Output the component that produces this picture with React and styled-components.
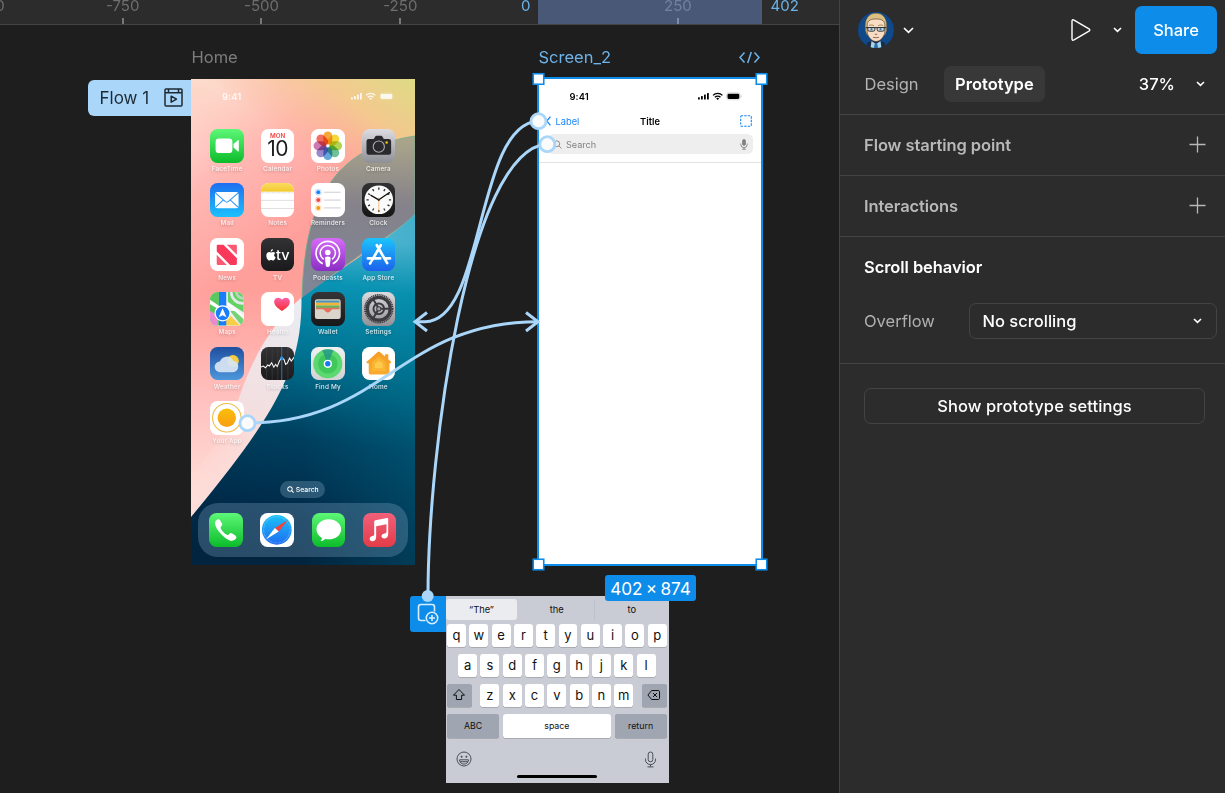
import React from 'react';
import styled, { createGlobalStyle } from 'styled-components';

const Global = createGlobalStyle`
  * { box-sizing: border-box; }
  html, body { margin: 0; background: #1e1e1e; overflow: hidden; }
  body { font-family: Inter, "Liberation Sans", sans-serif; font-size: 16.5px; color: #fff; }
  svg { display: block; flex: none; }
`;

const Shell = styled.div`
  display: flex;
  width: 1225px;
  height: 793px;
`;

/* ---------- canvas ---------- */
const Canvas = styled.main`
  display: flex;
  flex-direction: column;
  width: 839px;
  background: #1e1e1e;
  overflow: hidden;
`;

const Ruler = styled.div`
  position: relative;
  display: flex;
  height: 25px;
  background: #2c2c2c;
  border-bottom: 1px solid #444;
  overflow: hidden;
  font-size: 15px;
  color: #6e6e6e;
`;

const MarkRow = styled.div`
  position: relative;
  display: flex;
  height: 24px;
  flex: none;
`;

const Mark = styled.div`
  flex: none;
  display: flex;
  flex-direction: column;
  align-items: center;
  justify-content: space-between;
  width: 138.8px;
  line-height: 11px;
  color: ${(p) => (p.$dim ? '#7381a0' : '#6e6e6e')};
  &:first-child { margin-left: -85.5px; }
  &::after {
    content: '';
    width: 2px;
    height: 6px;
    background: ${(p) => (p.$dim ? '#7f8ba6' : '#777')};
    visibility: ${(p) => (p.$blank ? 'hidden' : 'visible')};
  }
`;

const Band = styled.div`
  position: absolute;
  left: 538px;
  top: 0;
  width: 224px;
  height: 24px;
  background: #4a5878;
`;

const BandEnd = styled.span`
  position: absolute;
  top: 0;
  line-height: 11px;
  color: #6cb4ea;
  ${(p) => (p.$side === 'start' ? 'right: 308.5px;' : 'left: 770.5px;')}
`;

const Surface = styled.div`
  position: relative;
  flex: 1;
`;

const Placed = styled.div`
  position: absolute;
  left: ${(p) => p.$x}px;
  top: ${(p) => p.$y}px;
`;

const FrameName = styled(Placed)`
  line-height: 20px;
  color: ${(p) => (p.$active ? '#6cb4ea' : '#7d7d7d')};
`;

const FlowTag = styled(Placed)`
  display: flex;
  align-items: center;
  justify-content: space-between;
  width: 103px;
  height: 36px;
  padding: 0 8px 0 11.5px;
  border-radius: 6px 0 0 6px;
  background: #a9d6f9;
  color: #1e2a33;
  font-size: 17px;
`;

const SizeTag = styled(Placed)`
  display: flex;
  align-items: center;
  justify-content: center;
  width: 91px;
  height: 26px;
  border-radius: 3px;
  background: #0d8ce9;
  font-size: 17.2px;
  word-spacing: -1.6px;
  white-space: nowrap;
`;

const OverlayBadge = styled(Placed)`
  display: flex;
  align-items: center;
  justify-content: center;
  width: 36.5px;
  height: 36px;
  border-radius: 3px 0 0 3px;
  background: #0d8ce9;
`;

const Links = styled.svg`
  position: absolute;
  inset: 0;
`;

/* ---------- phone screens ---------- */
const Phone = styled(Placed)`
  width: 223.5px;
  height: 486px;
  overflow: hidden;
  background: ${(p) => p.$bg || '#fff'};
  color: ${(p) => p.$ink};
`;

const Wallpaper = styled.svg`
  position: absolute;
  inset: 0;
`;

const PhoneBody = styled.div`
  position: relative;
  display: flex;
  flex-direction: column;
  height: 100%;
`;

const StatusRow = styled.div`
  display: flex;
  align-items: center;
  justify-content: space-between;
  height: 33px;
  padding: 2.5px 20px 0 31px;
  font-size: 9.4px;
  font-weight: 600;
  letter-spacing: 0.1px;
  opacity: ${(p) => (p.$soft ? 0.85 : 1)};
`;

const AppGrid = styled.div`
  display: grid;
  grid-template-columns: repeat(4, 33.6px);
  grid-auto-rows: 54.4px;
  column-gap: 16.8px;
  padding: 17px 0 0 19.4px;
`;

const AppCell = styled.div`
  display: flex;
  flex-direction: column;
  align-items: center;
  gap: 2.4px;
`;

const AppLabel = styled.span`
  font-size: 6.4px;
  font-weight: 500;
  line-height: 8px;
  letter-spacing: 0.18px;
  white-space: nowrap;
  color: rgba(255, 255, 255, 0.85);
  text-shadow: 0 1px 3px rgba(0, 0, 0, 0.25);
`;

const Tile = styled.div`
  width: 33.6px;
  height: 33.6px;
  border-radius: 7.6px;
  overflow: hidden;
  background: ${(p) => p.$bg};
`;

const CalendarFace = styled.div`
  display: flex;
  flex-direction: column;
  align-items: center;
  padding-top: 3px;
  color: #1c1c1e;
  font-size: 21px;
  line-height: 20px;
  letter-spacing: -0.6px;
`;

const Weekday = styled.span`
  font-size: 6.2px;
  font-weight: 600;
  line-height: 7px;
  letter-spacing: 0;
  color: #f0403c;
`;

const TvFace = styled.div`
  display: flex;
  align-items: center;
  justify-content: center;
  gap: 0.5px;
  height: 100%;
  color: #fff;
  font-size: 14.5px;
  font-weight: 500;
`;

const SearchPill = styled.div`
  display: flex;
  align-items: center;
  justify-content: center;
  gap: 2px;
  align-self: center;
  width: 45px;
  height: 17px;
  margin-top: 25.5px;
  border-radius: 9px;
  background: rgba(120, 160, 185, 0.35);
  font-size: 6.8px;
  font-weight: 500;
`;

const Dock = styled.div`
  display: flex;
  align-items: center;
  justify-content: space-between;
  margin: 5px 6.5px 0 6.5px;
  height: 54.5px;
  padding: 0 11.5px;
  border-radius: 20px;
  background: rgba(120, 160, 190, 0.33);
`;

const NavRow = styled.div`
  display: grid;
  grid-template-columns: 1fr auto 1fr;
  align-items: center;
  height: 18px;
  padding: 0 10px 0 7px;
  font-size: 9.3px;
`;

const NavBack = styled.span`
  display: flex;
  align-items: center;
  gap: 5px;
  color: #1684fb;
`;

const NavTitle = styled.strong`
  padding-left: 2.5px;
  font-weight: 600;
`;

const NavAction = styled.span`
  justify-self: end;
`;

const SearchField = styled.div`
  display: flex;
  align-items: center;
  gap: 4px;
  height: 20px;
  margin: 4px 9px 8px;
  padding: 0 5.5px 0 5.5px;
  border-radius: 5.5px;
  background: #eee;
  color: #828286;
  font-size: 9.1px;
`;

const SearchHint = styled.span`
  flex: 1;
`;

const Rule = styled.div`
  height: 1px;
  background: #e3e3e3;
`;

/* ---------- keyboard ---------- */
const Keyboard = styled(Placed)`
  display: flex;
  flex-direction: column;
  width: 223.5px;
  height: 186.5px;
  background: #c9ccd4;
  color: #111;
`;

const Suggestions = styled.div`
  display: grid;
  grid-template-columns: 71px 77.5px 1fr;
  height: 28px;
  padding: 3px 0 4px 0.5px;
  font-size: 9.3px;
`;

const Suggestion = styled.span`
  display: flex;
  align-items: center;
  justify-content: center;
  border-radius: ${(p) => (p.$on ? 3 : 0)}px;
  background: ${(p) => (p.$on ? '#ebecf0' : 'transparent')};
  border-right: ${(p) => (p.$split ? '1px solid #bec1c9' : '0')};
  padding-left: ${(p) => (p.$split ? 3 : 0)}px;
`;

const KeyRow = styled.div`
  display: flex;
  justify-content: ${(p) => (p.$spread ? 'space-between' : 'center')};
  gap: 3.3px;
  height: 23.3px;
  margin-bottom: 6.8px;
  padding: 0 2.4px 0 1.6px;
`;

const KeyGroup = styled.div`
  display: flex;
  gap: 3.3px;
`;

const Key = styled.span`
  display: flex;
  align-items: center;
  justify-content: center;
  width: ${(p) => p.$w || 19}px;
  height: 23.3px;
  padding-bottom: ${(p) => (p.$small ? 0 : 1.8)}px;
  border-radius: 2.8px;
  background: ${(p) => (p.$dark ? '#a0a5b2' : '#fff')};
  box-shadow: 0 0.6px 0 #898a8d;
  font-size: ${(p) => (p.$small ? 8.8 : 13)}px;
`;

const KeyboardFoot = styled.div`
  display: flex;
  justify-content: space-between;
  padding: 7px 12.5px 0 10.5px;
`;

const HomeBar = styled.div`
  align-self: center;
  width: 80px;
  height: 2.8px;
  margin-top: 6.5px;
  border-radius: 2px;
  background: #000;
`;

/* ---------- side panel ---------- */
const Panel = styled.aside`
  display: flex;
  flex-direction: column;
  width: 386px;
  background: #2c2c2c;
  border-left: 1px solid #444;
`;

const TopBar = styled.div`
  display: flex;
  align-items: center;
  height: 60px;
  padding: 0 8px 0 18px;
`;

const AccountMenu = styled.div`
  display: flex;
  align-items: center;
  gap: 8.5px;
`;

const TopActions = styled.div`
  display: flex;
  align-items: center;
  gap: 21.5px;
  margin-left: auto;
`;

const ShareButton = styled.button`
  width: 82px;
  height: 48px;
  margin-left: -8px;
  border: 0;
  border-radius: 7px;
  background: #0d8ce9;
  color: #fff;
  font: 550 16.5px Inter, sans-serif;
`;

const Tabs = styled.div`
  display: flex;
  align-items: center;
  height: 55px;
  padding: 0 20px 6px 13px;
  border-bottom: 1px solid #444;
`;

const Tab = styled.span`
  display: flex;
  align-items: center;
  height: 36px;
  padding: 0 11.5px;
  margin-right: 13.5px;
  border-radius: 7px;
  background: ${(p) => (p.$on ? '#383838' : 'transparent')};
  color: ${(p) => (p.$on ? '#fff' : '#b3b3b3')};
  font-weight: ${(p) => (p.$on ? 600 : 400)};
`;

const Zoom = styled.span`
  margin: 0 21px 0 auto;
  font-weight: 450;
`;

const Section = styled.section`
  display: flex;
  align-items: center;
  justify-content: space-between;
  height: 61px;
  padding: 0 18px 0 24px;
  border-bottom: 1px solid #444;
  color: #b8b8b8;
  font-weight: 600;
  letter-spacing: -0.07px;
`;

const ScrollSection = styled.section`
  display: flex;
  flex-direction: column;
  height: 127px;
  padding: 20px 8px 0 24px;
  border-bottom: 1px solid #444;
`;

const Heading = styled.h2`
  margin: 0 0 26px;
  font-size: 16.5px;
  font-weight: 600;
  line-height: 20px;
  letter-spacing: -0.07px;
`;

const Field = styled.div`
  display: flex;
  align-items: center;
  justify-content: space-between;
  color: #b0b0b0;
`;

const Select = styled.div`
  display: flex;
  align-items: center;
  justify-content: space-between;
  width: 248px;
  height: 36px;
  padding: 0 14px 0 12.5px;
  border: 1px solid #444;
  border-radius: 7px;
  color: #fff;
  font-weight: 450;
`;

const WideButton = styled.button`
  height: 36px;
  margin: 24px 20px 0 24px;
  border: 1px solid #444;
  border-radius: 7px;
  background: transparent;
  color: #fff;
  font: 450 16.5px Inter, sans-serif;
  letter-spacing: 0.1px;
`;

/* ---------- icons ---------- */
const Chevron = ({ size = 8 }) => (
  <svg width={size + 2} height="8" viewBox={`0 0 ${size + 2} 8`} fill="none" stroke="#fff" strokeWidth="1.6">
    <path d={`M1 2 L${size / 2 + 1} ${size / 2 + 1.8} L${size + 1} 2`} />
  </svg>
);

const Plus = () => (
  <svg width="18" height="18" viewBox="0 0 18 18" stroke="#b8b8b8" strokeWidth="1.3">
    <path d="M8.500.5v16M.5 8.500h16" />
  </svg>
);

const Signals = () => (
  <svg width="44" height="9" viewBox="0 0 44 9" fill="currentColor">
    <rect x="0" y="5.2" width="1.8" height="2.3" rx=".5" />
    <rect x="3" y="4" width="1.8" height="3.5" rx=".5" />
    <rect x="6" y="2.6" width="1.8" height="4.9" rx=".5" />
    <rect x="9" y="1" width="1.8" height="6.5" rx=".5" />
    <g fill="none" stroke="currentColor" strokeWidth="1.35">
      <path d="M15 3.4a6.6 6.6 0 0 1 9.4 0M16.9 5.3a4 4 0 0 1 5.6 0" />
    </g>
    <path d="M18.2 6.500a2.200 2.200 0 0 1 3 0l-1.500 1.600z" />
    <rect x="28.600" y=".8" width="13.600" height="7" rx="2.200" fill="none" stroke="currentColor" strokeWidth=".5" opacity=".3" />
    <rect x="29.500" y="1.700" width="11.800" height="5.200" rx="1.400" />
    <path d="M43 3.200v2c.7-.3.7-1.700 0-2z" opacity=".4" />
  </svg>
);

const Magnifier = ({ size, w = 1 }) => (
  <svg width={size} height={size} viewBox="0 0 9 9" fill="none" stroke="currentColor" strokeWidth={w}>
    <circle cx="3.8" cy="3.8" r="2.9" />
    <path d="M6 6l2.5 2.5" />
  </svg>
);

const Avatar = () => (
  <svg width="36" height="36" viewBox="0 0 36 36">
    <clipPath id="face"><circle cx="18" cy="18" r="18" /></clipPath>
    <g clipPath="url(#face)">
      <rect width="36" height="36" fill="#10498a" />
      <circle cx="18" cy="18" r="26" fill="none" stroke="#0b3c78" strokeWidth="17" strokeDasharray="1.4 2" opacity=".5" />
      <path d="M7.500 36l2-5.500 5-2h7l5 2 2 5.500z" fill="#1c2c40" />
      <path d="M13.500 29l4.500 3 4.500-3 1 7h-11z" fill="#a8d5ee" />
      <path d="M17 31h2l1.200 5h-4.400z" fill="#2b6ea5" />
      <path d="M7.600 19C6 7 10.500 1.400 18 1.300S30 7 28.400 19l-1.500 4H9.100z" fill="#dcbf83" stroke="#7f673d" strokeWidth=".5" />
      <path d="M9.200 12c1-4 3.800-5 8.800-5s7.800 1 8.800 5v8c-.4 4.500-4.500 9.500-8.800 9.500S9.600 24.500 9.200 20z" fill="#f8ddc5" stroke="#4b3626" strokeWidth=".6" />
      <path d="M10.800 13.600c1.800-.9 3.700-.8 5.200.3M20 13.900c1.500-1.100 3.400-1.200 5.200-.3" stroke="#a07c4c" strokeWidth=".9" fill="none" />
      <path d="M7.600 15.700h20.800" stroke="#222" strokeWidth="1" />
      <path d="M9.800 15.500h7v2.200q0 1.500-1.500 1.500h-4q-1.500 0-1.500-1.500zM19.200 15.500h7v2.200q0 1.500-1.500 1.500h-4q-1.500 0-1.500-1.500z" fill="#c9d5d8" stroke="#2a2a2a" strokeWidth=".9" />
      <circle cx="13.500" cy="17.200" r="1.100" fill="#3a78a6" /><circle cx="22.500" cy="17.200" r="1.100" fill="#3a78a6" />
      <path d="M16.800 22.300h2.400M15 25.300q3 .9 6 0" stroke="#7c4a3a" strokeWidth=".8" fill="none" />
    </g>
  </svg>
);

const Art = ({ children }) => <svg width="33.6" height="33.6" viewBox="0 0 60 60">{children}</svg>;

const Petal = styled.rect`
  mix-blend-mode: multiply;
`;

const petals = ['#f59b1e', '#f3d21c', '#a8ce3a', '#5bb98a', '#4c9ad8', '#8c78c4', '#c667a5', '#ef5a4c'];
const hours = Array.from({ length: 12 }, (_, i) => i * 30);

const apps = [
  ['FaceTime', 'linear-gradient(#5df777,#0cbc2a)', (
    <Art><rect x="10" y="17" width="30" height="26" rx="6" fill="#fff" /><path d="M42 27l8-7q1.500-1 1.500 1v18q0 2-1.500 1l-8-7z" fill="#fff" /></Art>
  )],
  ['Calendar', '#fff', <CalendarFace key="c"><Weekday>MON</Weekday>10</CalendarFace>],
  ['Photos', '#fff', (
    <Art>{petals.map((c, i) => (
      <Petal key={c} x="22" y="4.500" width="16" height="23" rx="8" fill={c} opacity=".88" transform={`rotate(${i * 45} 30 30)`} />
    ))}</Art>
  )],
  ['Camera', 'linear-gradient(#dcdce1,#8f8f96)', (
    <Art>
      <path d="M12 18h9l3-5q.7-1 2-1h8q1.300 0 2 1l3 5h9q4 0 4 4v20q0 4-4 4H12q-4 0-4-4V22q0-4 4-4z" fill="#2a2a2c" />
      <circle cx="30" cy="31.500" r="10" fill="none" stroke="#aaaab0" strokeWidth="2" />
      <circle cx="44" cy="24" r="2.200" fill="#f5c60a" />
    </Art>
  )],
  ['Mail', 'linear-gradient(#1f6ff0,#1bc1fc)', (
    <Art>
      <rect x="9" y="16" width="42" height="29" rx="4" fill="#fff" />
      <path d="M10 18l17 15q3 2.500 6 0l17-15M10 43l14-13M50 43L36 30" fill="none" stroke="#2c95f3" strokeWidth="1.800" />
    </Art>
  )],
  ['Notes', '#fff', (
    <Art>
      <linearGradient id="notes" x2="0" y2="1"><stop stopColor="#f9dc5f" /><stop offset="1" stopColor="#f2c92f" /></linearGradient>
      <rect width="60" height="15.500" fill="url(#notes)" />
      <path d="M0 17.500h60" stroke="#b4b0a4" strokeWidth="1.200" strokeDasharray="1 1.200" />
      <path d="M0 31h60M0 45.500h60" stroke="#cfcfd2" strokeWidth="1.200" />
    </Art>
  )],
  ['Reminders', '#fff', (
    <Art>{[['#1a83fb', 16.5], ['#f3473f', 30.5], ['#f79a0c', 44.5]].map(([c, y]) => (
      <g key={c}><circle cx="13" cy={y} r="5.300" fill="none" stroke={c} strokeOpacity=".4" strokeWidth="1.200" /><circle cx="13" cy={y} r="3.600" fill={c} /><path d={`M23 ${y}h30`} stroke="#c9c9cd" strokeWidth="1.600" /></g>
    ))}</Art>
  )],
  ['Clock', 'linear-gradient(#323234,#161617)', (
    <Art>
      <circle cx="30" cy="30" r="25.500" fill="#fafafa" />
      {hours.map((a) => <path key={a} d="M30 8v4" stroke="#333" strokeWidth="2.400" transform={`rotate(${a} 30 30)`} />)}
      <path d="M30 30L16 22M30 30L49 17" stroke="#111" strokeWidth="2.400" strokeLinecap="round" />
      <path d="M30 26v27" stroke="#f0932b" strokeWidth="1" /><circle cx="30" cy="30" r="2" fill="#222" />
    </Art>
  )],
  ['News', '#fff', (
    <Art>
      <path d="M12 14q0-2 2-2h10l24 24v10q0 2-2 2H36L12 24z" fill="#f9385a" />
      <path d="M30 12h16q2 0 2 2v16zM12 30l18 18H14q-2 0-2-2z" fill="#fb5873" />
    </Art>
  )],
  ['TV', 'linear-gradient(#323234,#1a1a1c)', (
    <TvFace key="t">
      <svg width="10" height="12" viewBox="0 0 19 23" fill="#fff">
        <path d="M13 0c.2 2.600-1.800 5-4 5-.3-2.500 1.800-4.700 4-5zM17.500 8c-3 2-2.600 6.500.9 7.900C17.300 19 15.500 22 13.600 22c-1.600 0-2-.9-3.800-.9S7.500 22 6.200 22C3.500 22 .5 17 .5 12.400.5 8 3.200 5.700 5.900 5.700c1.700 0 2.900 1 4 1 1 0 2.400-1.100 4.300-1 1.300 0 2.600.8 3.300 2.300z" />
      </svg>
      tv
    </TvFace>
  )],
  ['Podcasts', 'linear-gradient(#d76bf8,#8a2fc4)', (
    <Art>
      <g fill="none" stroke="#fff" strokeWidth="2.800"><path d="M21 46a21 21 0 1 1 18 0" /><path d="M22.500 38a13.500 13.500 0 1 1 15 0" /></g>
      <circle cx="30" cy="26" r="5" fill="#fff" /><path d="M30 33c4 0 5.300 1.600 5 4l-1.400 12q-.6 3-3.600 3t-3.600-3L25 37c-.3-2.400 1-4 5-4z" fill="#fff" />
    </Art>
  )],
  ['App Store', 'linear-gradient(#1cc4fb,#1c62ec)', (
    <Art><g stroke="#fff" strokeWidth="4.800" strokeLinecap="round" fill="none"><path d="M33.500 13L17.500 40.500M26.500 13L45 45M10.500 36.500h22M41 36.500h9M14.500 45.500l.8-1.500" /></g></Art>
  )],
  ['Maps', '#eceff0', (
    <Art>
      <path d="M0 0h16v60H0z" fill="#5ac85c" /><path d="M32 0h28v36L32 18z" fill="#62d264" />
      <path d="M38 0a20 20 0 0 0 22 20" fill="none" stroke="#e5e8ea" strokeWidth="5" /><path d="M47 0a12 12 0 0 0 13 11" fill="none" stroke="#b7d8ba" strokeWidth="5" />
      <path d="M32 18l28 24v10L30 22z" fill="#fff" /><path d="M28 60V34l26 26z" fill="#f7ce45" /><path d="M44 34l16 14v12h-4L36 34z" fill="#68cf68" opacity=".9" />
      <path d="M0 34l14 8v18H0z" fill="#e989d2" /><path d="M0 14l18 12v6L0 22z" fill="#fff" />
      <path d="M16 0h13v60H16z" fill="#1a7dfa" />
      <circle cx="22.500" cy="38" r="14.500" fill="#fff" /><circle cx="22.500" cy="38" r="12.300" fill="#1a7dfa" /><path d="M22.500 29l7 16-7-3.600-7 3.600z" fill="#fff" />
    </Art>
  )],
  ['Health', '#fff', (
    <Art>
      <linearGradient id="heart" x2="0" y2="1"><stop stopColor="#fb62a8" /><stop offset="1" stopColor="#f72c31" /></linearGradient>
      <path d="M37.500 34C28 28 23.500 23 23.500 17.500c0-8 10-10 14-3.500 4-6.500 14-4.500 14 3.500 0 5.500-4.500 10.500-14 16.500z" fill="url(#heart)" />
    </Art>
  )],
  ['Wallet', 'linear-gradient(#343436,#18181a)', (
    <Art>
      <rect x="7" y="13" width="46" height="35" rx="4" fill="#d9d5ca" />
      <path d="M9 19v-2q0-2 2-2h38q2 0 2 2v2z" fill="#4c93b8" /><path d="M9 19h42v5H9z" fill="#f1b43b" /><path d="M9 24h42v5H9z" fill="#68b35b" />
      <path d="M9 28h42v4H38c-3 0-4 5-8 5s-5-5-8-5H9z" fill="#e5705f" />
      <path d="M8 31h13c3 0 4 6 9 6s6-6 9-6h13v12q0 4-4 4H12q-4 0-4-4z" fill="#d9d5ca" />
    </Art>
  )],
  ['Settings', 'linear-gradient(#dcdcdf,#909096)', (
    <Art>
      <g fill="none" stroke="#3c3c40"><circle cx="30" cy="30" r="24.800" strokeWidth="3" strokeDasharray="2.200 1.200" /><circle cx="30" cy="30" r="20.500" strokeWidth="6" /><circle cx="30" cy="30" r="9.500" strokeWidth="3.500" />
        <path d="M30 30h20M30 30L20 47M30 30L20 13" strokeWidth="3.500" /></g>
      <circle cx="30" cy="30" r="3.800" fill="#a5a5aa" stroke="#3c3c40" strokeWidth="1.800" />
    </Art>
  )],
  ['Weather', 'linear-gradient(#1f4fa0,#4d97dc)', (
    <Art>
      <circle cx="41" cy="25" r="10.500" fill="#f6cd3c" />
      <path d="M18 45a9.500 9.500 0 0 1-.5-19 13 13 0 0 1 24-1.500A10.300 10.300 0 0 1 41 45z" fill="#d7e4f4" opacity=".93" />
    </Art>
  )],
  ['Stocks', 'linear-gradient(#333335,#1b1b1d)', (
    <Art>
      <path d="M10 0v60M20 0v60M30 0v60M48 0v60" stroke="#454548" strokeWidth="1" /><path d="M37 0v60" stroke="#2c6ca4" strokeWidth="2" />
      <path d="M0 36l4-2 4 3 4-5 3 2 4-6 4 8 3-5 3 4 4-10 4-6 4 3 3 9 3-2 4-9 3 5 6-8" fill="none" stroke="#fff" strokeWidth="1.800" />
      <circle cx="37" cy="20" r="3" fill="#2f94e8" />
    </Art>
  )],
  ['Find My', 'linear-gradient(#f1f1f1,#d2d2d4)', (
    <Art>
      <circle cx="30" cy="30" r="26" fill="#5bd870" /><circle cx="30" cy="30" r="17.500" fill="#40c85c" />
      <path d="M30 30L20 6a26 26 0 0 1 20 0z" fill="#1b8f8f" opacity=".7" />
      <circle cx="30" cy="30" r="7.300" fill="#fff" /><circle cx="30" cy="30" r="4.800" fill="#127cf5" />
    </Art>
  )],
  ['Home', '#fff', (
    <Art>
      <linearGradient id="house" x2="0" y2="1"><stop stopColor="#f79d26" /><stop offset="1" stopColor="#f8ab2e" /></linearGradient>
      <path d="M8 27L28 9q2-1.500 4 0l9 8v-4h6v9l5 5q1 2-1 2h-2v17q0 3-3 3H15q-3 0-3-3V29h-3q-2-.5-1-2z" fill="url(#house)" />
      <path d="M18 27l12-10 12 10v16H18z" fill="#fbb834" opacity=".8" /><path d="M23 30l7-6 7 6v8H23z" fill="#fdd052" opacity=".8" />
    </Art>
  )],
  ['Your App', '#fff', (
    <Art>
      <linearGradient id="sun" x2="0" y2="1"><stop stopColor="#fbbf09" /><stop offset="1" stopColor="#f79e12" /></linearGradient>
      <circle cx="30" cy="30" r="25.500" fill="none" stroke="#eebb46" strokeWidth="1.800" /><circle cx="30" cy="30" r="16.500" fill="url(#sun)" />
    </Art>
  )],
];

const dockApps = [
  ['phone', 'linear-gradient(#5df777,#0cbc2a)', (
    <Art><path d="M13 13c3-3 5-2.500 7 .5l3 5c1.300 2.300.8 3.800-1 5.300-2 1.600-1.700 3 .3 6 2.500 3.700 4.700 6 8.200 8.300 2.500 1.700 4 1.500 5.500-.5 1.700-2 3.300-2.200 5.500-.8l5.500 3.500c2.500 1.800 2.700 3.700.5 6.200-4.500 5-11 3.500-19-2.500C20.500 37.700 14 30 11.500 22.500c-1.200-4-1-7 1.500-9.500z" fill="#fff" /></Art>
  )],
  ['safari', '#fff', (
    <Art>
      <linearGradient id="safari" x2="0" y2="1"><stop stopColor="#1bc2f8" /><stop offset="1" stopColor="#1e6df2" /></linearGradient>
      <circle cx="30" cy="30" r="26.500" fill="url(#safari)" /><circle cx="30" cy="30" r="23.500" fill="none" stroke="#fff" strokeOpacity=".45" strokeWidth="2" strokeDasharray=".8 1.600" />
      <path d="M49 13L26.500 27l7 6z" fill="#f6403a" /><path d="M11 47l15.500-20 7 6z" fill="#fff" />
    </Art>
  )],
  ['messages', 'linear-gradient(#5df777,#0cbc2a)', (
    <Art><path d="M30 11c12.500 0 22 7.800 22 18s-9.500 18-22 18c-2.300 0-4.500-.2-6.500-.7C21.500 48.500 18.500 50 15 50c1.700-1.600 2.700-3.500 2.700-5.500C11.800 41.300 8 35.600 8 29c0-10.200 9.500-18 22-18z" fill="#fff" /></Art>
  )],
  ['music', 'linear-gradient(#f0607a,#e33c48)', (
    <Art><path d="M20 15.500q0-2 2-2.500L43 9q2-.3 2 1.500V38c0 5-3.500 7.500-7 7.500-6.500 0-6.500-8 0-9 3-.5 4-1 4-3.500V20l-18.500 3.800V43c0 5-3 7.500-6.700 7.500-6.500 0-6.500-8.300 0-9.300 2.700-.4 3.200-1.200 3.200-3.700z" fill="#fff" /></Art>
  )],
];

const HomeWallpaper = () => (
  <Wallpaper width="223.5" height="486" viewBox="191 79 223.5 486">
    <defs>
      <linearGradient id="pink" x1="191" y1="110" x2="330" y2="300" gradientUnits="userSpaceOnUse">
        <stop stopColor="#ffdcd8" /><stop offset=".28" stopColor="#ffb9b4" /><stop offset=".7" stopColor="#ff9f9b" /><stop offset="1" stopColor="#ff9f98" />
      </linearGradient>
      <linearGradient id="glow" x1="414" y1="79" x2="330" y2="180" gradientUnits="userSpaceOnUse">
        <stop stopColor="#dedb84" /><stop offset=".45" stopColor="#f3c98c" stopOpacity=".9" /><stop offset="1" stopColor="#ffa58f" stopOpacity="0" />
      </linearGradient>
      <linearGradient id="topfade" x1="0" y1="79" x2="0" y2="150" gradientUnits="userSpaceOnUse">
        <stop stopColor="#fbdbc8" stopOpacity=".8" /><stop offset="1" stopColor="#ffb59a" stopOpacity="0" />
      </linearGradient>
      <linearGradient id="lowfade" x1="0" y1="290" x2="0" y2="500" gradientUnits="userSpaceOnUse">
        <stop stopColor="#ffc4c3" stopOpacity="0" /><stop offset=".5" stopColor="#ffc8c7" stopOpacity=".8" /><stop offset="1" stopColor="#ffe1da" />
      </linearGradient>
      <linearGradient id="blade" x1="300" y1="300" x2="225" y2="460" gradientUnits="userSpaceOnUse">
        <stop stopColor="#e9edf2" /><stop offset=".6" stopColor="#f2e0e2" /><stop offset="1" stopColor="#fddbd6" />
      </linearGradient>
      <linearGradient id="bladeTail" x1="205" y1="425" x2="243" y2="445" gradientUnits="userSpaceOnUse">
        <stop stopColor="#ffdad6" stopOpacity="0" /><stop offset="1" stopColor="#fbdcd9" />
      </linearGradient>
      <linearGradient id="lens" x1="0" y1="136" x2="0" y2="300" gradientUnits="userSpaceOnUse">
        <stop stopColor="#aca78a" /><stop offset=".42" stopColor="#85828a" /><stop offset="1" stopColor="#7d8798" />
      </linearGradient>
      <linearGradient id="sea" x1="345" y1="235" x2="300" y2="565" gradientUnits="userSpaceOnUse">
        <stop stopColor="#5cc0dc" /><stop offset=".15" stopColor="#0a95b6" /><stop offset=".38" stopColor="#00708f" /><stop offset=".62" stopColor="#003f5f" /><stop offset=".85" stopColor="#002a48" /><stop offset="1" stopColor="#02243e" />
      </linearGradient>
      <linearGradient id="seaRight" x1="300" y1="0" x2="414" y2="0" gradientUnits="userSpaceOnUse">
        <stop stopColor="#008099" stopOpacity="0" /><stop offset="1" stopColor="#008099" stopOpacity=".25" />
      </linearGradient>
    </defs>
    <rect x="191" y="79" width="224" height="486" fill="url(#pink)" />
    <rect x="191" y="79" width="224" height="110" fill="url(#topfade)" />
    <rect x="191" y="79" width="224" height="200" fill="url(#glow)" />
    <rect x="191" y="290" width="224" height="275" fill="url(#lowfade)" />
    <path d="M240 396C230 425 210 455 191 475V520L285 400Z" fill="url(#bladeTail)" />
    <path d="M302 297C273 322 254 355 240 395C237 403 235 410 232 418L250 440L285 400L305 340Z" fill="url(#blade)" />
    <path d="M415 136C350 146 304 180 302 300C360 250 395 235 415 214Z" fill="url(#lens)" stroke="#6fae8d" strokeWidth=".8" />
    <path d="M415 214C395 235 350 262 301.500 298C302 365 280 410 191 517V565H415Z" fill="url(#sea)" />
    <path d="M415 214C395 235 350 262 301.500 298C302 365 280 410 191 517V565H415Z" fill="url(#seaRight)" />
  </Wallpaper>
);

const HomeScreen = () => (
  <Phone $x={191} $y={54} $ink="#fff">
    <HomeWallpaper />
    <PhoneBody>
      <StatusRow $soft><span>9:41</span><Signals /></StatusRow>
      <AppGrid>
        {apps.map(([name, bg, art]) => (
          <AppCell key={name}><Tile $bg={bg}>{art}</Tile><AppLabel>{name}</AppLabel></AppCell>
        ))}
      </AppGrid>
      <SearchPill><Magnifier size={7} w={1.3} />Search</SearchPill>
      <Dock>{dockApps.map(([id, bg, art]) => <Tile key={id} $bg={bg}>{art}</Tile>)}</Dock>
    </PhoneBody>
  </Phone>
);

const SearchScreen = () => (
  <Phone $x={538.5} $y={54} $ink="#000">
    <PhoneBody>
      <StatusRow><span>9:41</span><Signals /></StatusRow>
      <NavRow>
        <NavBack>
          <svg width="5" height="10" viewBox="0 0 5 10" fill="none" stroke="currentColor" strokeWidth="1.3"><path d="M4.400.6L.8 5l3.600 4.400" /></svg>
          Label
        </NavBack>
        <NavTitle>Title</NavTitle>
        <NavAction>
          <svg width="12" height="12" viewBox="0 0 12 12" fill="none" stroke="#1684fb" strokeWidth="1.1"><rect x=".7" y=".7" width="10.6" height="10.6" rx="1" strokeDasharray="2.4 1.13" strokeDashoffset="1" /></svg>
        </NavAction>
      </NavRow>
      <SearchField>
        <Magnifier size={9} w={0.9} />
        <SearchHint>Search</SearchHint>
        <svg width="8" height="11" viewBox="0 0 8 11" fill="none" stroke="currentColor" strokeWidth=".9"><rect x="2.6" y=".6" width="2.8" height="5.8" rx="1.4" fill="currentColor" /><path d="M.8 4.500v1a3.200 3.200 0 0 0 6.400 0v-1M4 8.600v1.600M2.300 10.300h3.400" /></svg>
      </SearchField>
      <Rule />
    </PhoneBody>
  </Phone>
);

const keysOf = (letters) => letters.split('').map((l) => <Key key={l}>{l}</Key>);

const KeyboardFrame = () => (
  <Keyboard $x={445.5} $y={571}>
    <Suggestions>
      <Suggestion $on>“The”</Suggestion><Suggestion $split>the</Suggestion><Suggestion>to</Suggestion>
    </Suggestions>
    <KeyRow>{keysOf('qwertyuiop')}</KeyRow>
    <KeyRow>{keysOf('asdfghjkl')}</KeyRow>
    <KeyRow $spread>
      <Key $dark $w={24.5}>
        <svg width="14" height="13" viewBox="0 0 14 13" fill="none" stroke="#111" strokeWidth="1" strokeLinejoin="round"><path d="M7 1.500l5.500 5.700H9.600v4.300H4.400V7.200H1.500z" /></svg>
      </Key>
      <KeyGroup>{keysOf('zxcvbnm')}</KeyGroup>
      <Key $dark $w={24.5}>
        <svg width="14" height="12" viewBox="0 0 14 12" fill="none" stroke="#111" strokeWidth="1" strokeLinejoin="round"><path d="M4.700 1.500h6.600q1.200 0 1.200 1.200v6.600q0 1.200-1.200 1.200H4.700L.9 6zM6 4l4 4M10 4L6 8" /></svg>
      </Key>
    </KeyRow>
    <KeyRow $spread><Key $dark $small $w={52}>ABC</Key><Key $small $w={108.5}>space</Key><Key $dark $small $w={52}>return</Key></KeyRow>
    <KeyboardFoot>
      <svg width="16" height="16" viewBox="0 0 16 16" fill="none" stroke="#4a4d55" strokeWidth="1">
        <circle cx="8" cy="8" r="7" /><path d="M3.500 8.800h9a4.500 4.300 0 0 1-9 0zM4 10.700h8" /><circle cx="5.6" cy="5.7" r=".6" fill="#4a4d55" /><circle cx="10.4" cy="5.7" r=".6" fill="#4a4d55" />
      </svg>
      <svg width="13" height="17" viewBox="0 0 13 17" fill="none" stroke="#4a4d55" strokeWidth="1"><rect x="4.2" y="1" width="4.6" height="9.8" rx="2.3" /><path d="M1.500 7.500v1.300a5 4.800 0 0 0 10 0V7.500M6.500 13.600v2M3.500 15.900h6" /></svg>
    </KeyboardFoot>
    <HomeBar />
  </Keyboard>
);

const corners = [[538.5, 79], [761.5, 79], [538.5, 564.5], [761.5, 564.5]];
const nodes = [[538.5, 121.2], [547.3, 144.2], [247.5, 423.2]];

const Connections = () => (
  <Links width="839" height="768" viewBox="0 25 839 768" fill="none">
    <rect x="538" y="78" width="224" height="487" stroke="#0d8ce9" strokeWidth="2" />
    <g stroke="#a9d6f9" strokeWidth="3">
      <path d="M247 423C383 423 400 322 538 321.700" />
      <path d="M538 121C475 125 485 322 425 321.700H415" />
      <path d="M547 144C468 150 428 450 428 596" />
      <path d="M427 312.500L415 321.700L427 331" /><path d="M526 312.500L538 321.700L526 331" />
    </g>
    {corners.map(([x, y]) => <rect key={`${x},${y}`} x={x - 5.25} y={y - 5.25} width="10.5" height="10.5" fill="#fff" stroke="#0d8ce9" strokeWidth="1.6" />)}
    {nodes.map(([x, y]) => <circle key={y} cx={x} cy={y} r="7.5" fill="#fbfbfb" stroke="#a9d6f9" strokeWidth="2.8" />)}
    <circle cx="427.7" cy="596" r="6" fill="#a9d6f9" />
  </Links>
);

const RulerMarks = () => (
  <MarkRow>
    {['-1000', '-750', '-500', '-250', '', '250'].map((t) => (
      <Mark key={t} $dim={t === '250'} $blank={!t}>{t || <span />}</Mark>
    ))}
  </MarkRow>
);

export default function App() {
  return (
    <Shell>
      <Global />
      <Canvas>
        <Ruler>
          <Band />
          <RulerMarks />
          <BandEnd $side="start">0</BandEnd>
          <BandEnd $side="end">402</BandEnd>
        </Ruler>
        <Surface>
          <FrameName $x={191.5} $y={22}>Home</FrameName>
          <FrameName $x={538.5} $y={22} $active>Screen_2</FrameName>
          <Placed $x={739} $y={26}>
            <svg width="21" height="13" viewBox="0 0 21 13" fill="none" stroke="#6cb4ea" strokeWidth="1.5"><path d="M5.500 1.500L1 6.500l4.500 5M15.500 1.500l4.500 5-4.500 5M12.300 1L8.700 12" /></svg>
          </Placed>
          <FlowTag $x={88} $y={54.5}>
            Flow 1
            <svg width="19" height="19" viewBox="0 0 19 19" fill="none" stroke="#1e2a33" strokeWidth="1.5"><rect x="1" y="1" width="17" height="17" rx="1" /><path d="M1 4.800h17M4.500 1v3.500M14.500 1v3.500M7.200 8.200v6l5.300-3z" strokeLinejoin="round" /></svg>
          </FlowTag>
          <HomeScreen />
          <SearchScreen />
          <KeyboardFrame />
          <SizeTag $x={605} $y={550}>402 × 874</SizeTag>
          <OverlayBadge $x={409.5} $y={570.5}>
            <svg width="22" height="22" viewBox="0 0 22 22" fill="none" stroke="#d9eefd" strokeWidth="1.6"><path d="M8.500 17.500H4q-2.500 0-2.500-2.500V4Q1.500 1.500 4 1.500h11q2.500 0 2.500 2.500v4.500" /><circle cx="15" cy="15" r="5.7" /><path d="M15 12v6M12 15h6" /></svg>
          </OverlayBadge>
          <Connections />
        </Surface>
      </Canvas>
      <Panel>
        <TopBar>
          <AccountMenu><Avatar /><Chevron size={9} /></AccountMenu>
          <TopActions>
            <svg width="20" height="24" viewBox="0 0 20 24" fill="none" stroke="#fff" strokeWidth="1.4" strokeLinejoin="round"><path d="M1 3.200v17.600q0 2.200 2 1.100L18 13.200q1.500-1.200 0-2.400L3 2.100Q1 1 1 3.200z" /></svg>
            <Chevron size={7} />
            <ShareButton>Share</ShareButton>
          </TopActions>
        </TopBar>
        <Tabs>
          <Tab>Design</Tab><Tab $on>Prototype</Tab><Zoom>37%</Zoom><Chevron size={7} />
        </Tabs>
        <Section>Flow starting point<Plus /></Section>
        <Section>Interactions<Plus /></Section>
        <ScrollSection>
          <Heading>Scroll behavior</Heading>
          <Field>Overflow<Select>No scrolling<Chevron size={7} /></Select></Field>
        </ScrollSection>
        <WideButton>Show prototype settings</WideButton>
      </Panel>
    </Shell>
  );
}
